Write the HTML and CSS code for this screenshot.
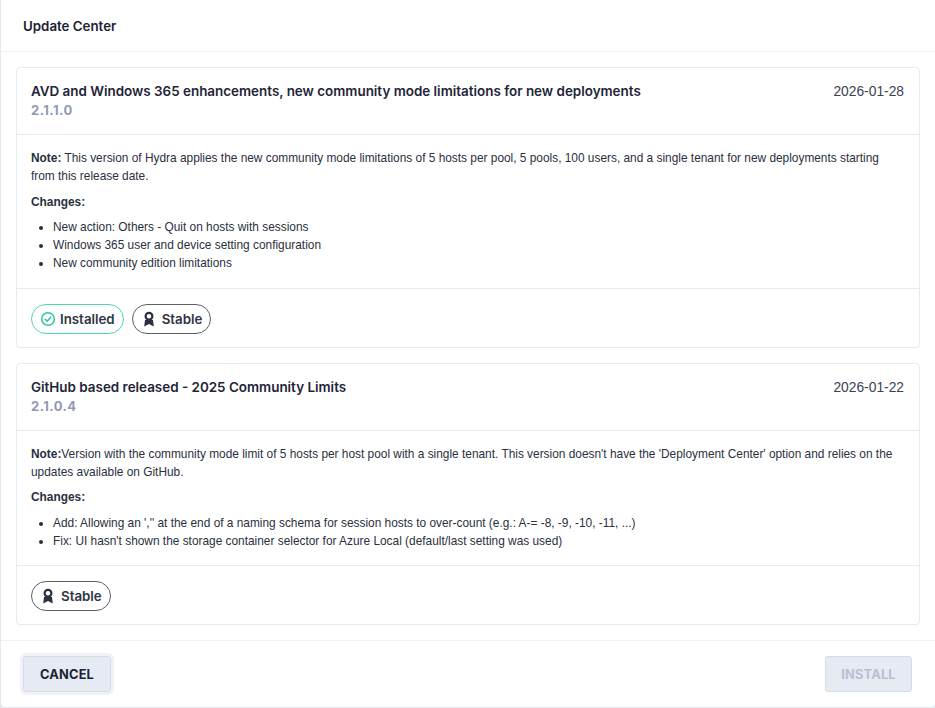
FILE: index.html
```html
<!DOCTYPE html>
<html lang="en">
<head>
<meta charset="utf-8">
<title>Update Center</title>
<link rel="stylesheet" href="styles.css">
</head>
<body>
<div class="dialog">
  <header class="dialog-head">Update Center</header>
  <main class="dialog-body">
    <section class="card">
      <div class="card-head">
        <div>
          <div class="card-title">AVD and Windows 365 enhancements, new community mode limitations for new deployments</div>
          <div class="card-version">2.1.1.0</div>
        </div>
        <div class="card-date">2026-01-28</div>
      </div>
      <div class="card-notes">
        <p><strong>Note:</strong> This version of Hydra applies the new community mode limitations of 5 hosts per pool, 5 pools, 100 users, and a single tenant for new deployments starting from this release date.</p>
        <p><strong>Changes:</strong></p>
        <ul>
          <li>New action: Others - Quit on hosts with sessions</li>
          <li>Windows 365 user and device setting configuration</li>
          <li>New community edition limitations</li>
        </ul>
      </div>
      <div class="card-tags">
        <span class="tag tag-ok">
          <svg class="tag-icon" viewBox="0 0 16 16"><circle cx="8" cy="8" r="6.3" fill="none" stroke="#2fc79b" stroke-width="1.5"/><path d="M5.2 8.2l2 2 3.7-4.2" fill="none" stroke="#2fc79b" stroke-width="1.5" stroke-linecap="round" stroke-linejoin="round"/></svg>
          Installed
        </span>
        <span class="tag">
          <svg class="tag-icon" viewBox="0 0 16 16"><path d="M4 9 3.2 15.6 8 13l4.8 2.6L12 9z" fill="#2a3040"/><circle cx="8" cy="5.2" r="3.4" fill="#fff" stroke="#2a3040" stroke-width="2.2"/></svg>
          Stable
        </span>
      </div>
    </section>
    <section class="card">
      <div class="card-head">
        <div>
          <div class="card-title">GitHub based released - 2025 Community Limits</div>
          <div class="card-version">2.1.0.4</div>
        </div>
        <div class="card-date">2026-01-22</div>
      </div>
      <div class="card-notes">
        <p><strong>Note:</strong>Version with the community mode limit of 5 hosts per host pool with a single tenant. This version doesn't have the 'Deployment Center' option and relies on the updates available on GitHub.</p>
        <p><strong>Changes:</strong></p>
        <ul>
          <li>Add: Allowing an ','' at the end of a naming schema for session hosts to over-count (e.g.: A-= -8, -9, -10, -11, ...)</li>
          <li>Fix: UI hasn't shown the storage container selector for Azure Local (default/last setting was used)</li>
        </ul>
      </div>
      <div class="card-tags">
        <span class="tag">
          <svg class="tag-icon" viewBox="0 0 16 16"><path d="M4 9 3.2 15.6 8 13l4.8 2.6L12 9z" fill="#2a3040"/><circle cx="8" cy="5.2" r="3.4" fill="#fff" stroke="#2a3040" stroke-width="2.2"/></svg>
          Stable
        </span>
      </div>
    </section>
  </main>
  <footer class="dialog-foot">
    <button class="btn btn-cancel" type="button">CANCEL</button>
    <button class="btn btn-install" type="button" disabled>INSTALL</button>
  </footer>
</div>
</body>
</html>
```
FILE: styles.css
```css
* { box-sizing: border-box; }
html, body { margin: 0; height: 100%; }
body {
  background: #e4e8f2;
  font-family: "Liberation Sans", Arial, sans-serif;
  color: #2a3040;
}
.dialog {
  height: 707px;
  margin-left: 1px;
  background: #fff;
  border-radius: 0 0 4px 4px;
  display: flex;
  flex-direction: column;
}
.dialog-head {
  flex: none;
  height: 52px;
  padding: 18px 22px 0;
  font: 600 13.3px/16px Inter, sans-serif;
  color: #1c2333;
  border-bottom: 1px solid #eff1f7;
}
.dialog-body {
  flex: 1;
  min-height: 0;
  padding: 15px 15px 0;
  display: flex;
  flex-direction: column;
  gap: 15px;
}
.card {
  flex: none;
  border: 1px solid #e6eaf2;
  border-radius: 4px;
}
.card-head {
  display: flex;
  justify-content: space-between;
  padding: 13px 15px 15px 14px;
  border-bottom: 1px solid #e6eaf2;
}
.card-title {
  font: 600 13.43px/21px Inter, sans-serif;
  color: #1f2538;
}
.card-version {
  font: 700 13px/17px Inter, sans-serif;
  letter-spacing: .45px;
  color: #8f9ab3;
}
.card-date { font-size: 13.8px; line-height: 21px; color: #3a4156; }
.card-notes {
  padding: 14px 16px 15px 14px;
  font-size: 11.88px;
  line-height: 18.3px;
  border-bottom: 1px solid #e6eaf2;
}
.card-notes p { margin: 0 0 7px; }
.card-notes ul { margin: 0; padding-left: 22px; }
.card-notes strong { font-weight: 700; }
.card-tags {
  display: flex;
  gap: 8px;
  padding: 15px 14px 13px;
}
.tag {
  display: inline-flex;
  align-items: center;
  gap: 5px;
  height: 30px;
  padding: 0 8px;
  border: 1px solid #5a5f6b;
  border-radius: 15px;
  font: 600 13.3px/16px Inter, sans-serif;
  color: #2f3543;
}
.tag-ok { border-color: #4fd6ad; gap: 4px; }
.tag-icon { width: 16px; height: 16px; flex: none; }
.dialog-foot {
  flex: none;
  height: 67px;
  border-top: 1px solid #eff1f7;
  padding: 15px 23px 15px 22px;
  display: flex;
  justify-content: space-between;
  align-items: flex-start;
}
.btn {
  height: 36px;
  border-radius: 3px;
  border: 1px solid #d6dbe8;
  background: #e6eaf3;
  font: 700 12.8px/16px Inter, sans-serif;
  letter-spacing: .2px;
  padding: 1px 0 0;
}
.btn-cancel {
  width: 88px;
  color: #1c2333;
  box-shadow: 0 0 0 3px #f0f2f8;
}
.btn-install { width: 87px; color: #b9c0d2; }
```
